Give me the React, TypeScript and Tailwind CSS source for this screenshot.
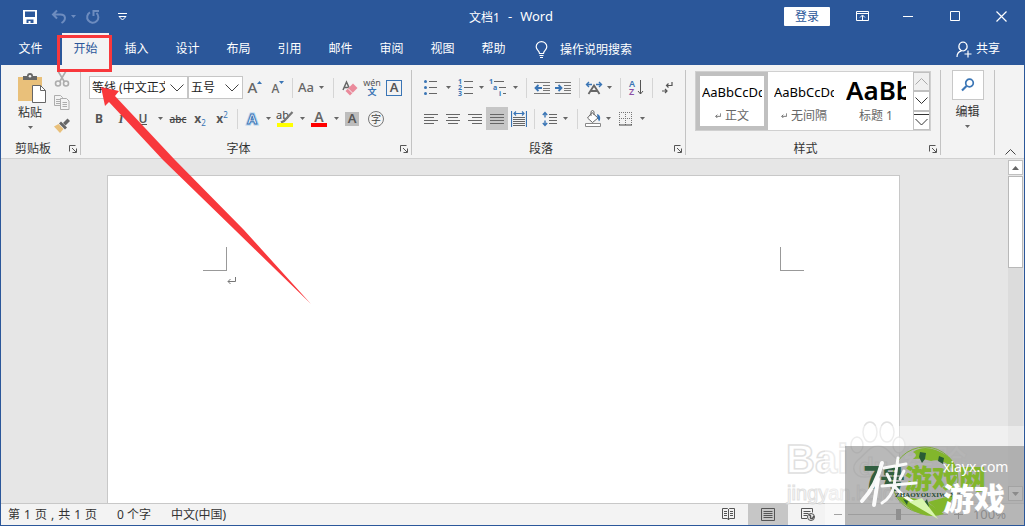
import type { ReactNode } from "react";

const TABS = ["文件", "开始", "插入", "设计", "布局", "引用", "邮件", "审阅", "视图", "帮助"];

function Caret() {
  return (
    <svg width="5" height="3" viewBox="0 0 5 3" className="shrink-0" aria-hidden="true">
      <path d="M0 0h5L2.5 3z" fill="#666" />
    </svg>
  );
}

function Tool({ label, w, children, active }: { label: string; w: string; children: ReactNode; active?: boolean }) {
  return (
    <button
      type="button"
      aria-label={label}
      className={`flex h-[23px] shrink-0 items-center justify-center ${w} ${active ? "bg-[#c6c6c6]" : ""}`}
    >
      {children}
    </button>
  );
}

function Drop({ label, w }: { label: string; w: string }) {
  return (
    <Tool label={label} w={w}>
      <Caret />
    </Tool>
  );
}

function Divider({ w }: { w: string }) {
  return (
    <span className={`flex h-[23px] shrink-0 items-center justify-center ${w}`}>
      <span className="h-5 w-px bg-[#d5d5d5]" />
    </span>
  );
}

function Launcher({ label }: { label: string }) {
  return (
    <button type="button" aria-label={label} className="mr-[3px]">
      <svg width="8" height="8" viewBox="0 0 8 8" fill="none" stroke="#555" aria-hidden="true">
        <path d="M.5 6.5v-6h6M3 3l4 4M7.5 3.5v4h-4" />
      </svg>
    </button>
  );
}

function Group({ name, launcher, children, className }: { name: string; launcher?: boolean; children: ReactNode; className: string }) {
  return (
    <section aria-label={name} className={`shrink-0 border-r border-[#c3c3c3] ${className}`}>
      <div className="h-[73px]">{children}</div>
      {launcher && (
        <div className="flex h-3 items-center">
          <span className="flex-1 pr-1 text-center leading-3">{name}</span>
          <Launcher label={`${name}设置`} />
        </div>
      )}
    </section>
  );
}

function Lines({ rows }: { rows: [number, number][] }) {
  return (
    <svg width="16" height="14" viewBox="0 0 16 14" stroke="#666" aria-hidden="true">
      {rows.map(([a, b], i) => (
        <path key={i} d={`M${a} ${i * 3 + 2.5}H${b}`} />
      ))}
    </svg>
  );
}

function Combo({ label, value, w }: { label: string; value: string; w: string }) {
  return (
    <span className={`relative block h-[23px] shrink-0 ${w}`}>
      <select
        aria-label={label}
        className="h-full w-full appearance-none border border-[#c6c6c6] bg-white pr-[22px] pl-0.5 text-xs text-[#222] outline-none"
      >
        <option>{value}</option>
      </select>
      <svg width="14" height="8" viewBox="0 0 14 8" className="pointer-events-none absolute top-2 right-1" fill="none" stroke="#444" aria-hidden="true">
        <path d="M.5 .5L7 7L13.5 .5" />
      </svg>
    </span>
  );
}

function TitleBar() {
  return (
    <div className="flex h-[33px] items-center text-white">
      <div className="flex flex-1 items-center pl-[21px]">
        <button type="button" aria-label="保存" className="mr-[13px]">
          <svg width="16" height="16" viewBox="0 0 16 16" className="block" aria-hidden="true">
            <path d="M1 1h14v14H1zM3 2.5v5.5h10V2.5zM4.5 10.5v3.500h2v-2h2v2h3v-3.500z" fill="#fff" fillRule="evenodd" />
          </svg>
        </button>
        <button type="button" aria-label="撤消" className="mr-1">
          <svg width="16" height="16" viewBox="0 0 16 16" className="block" fill="none" stroke="#6d8cbf" strokeWidth="2" aria-hidden="true">
            <path d="M6 1.500L2 5.500L6 9.500M2.500 5.500H9.500C15 5.500 15.500 11 10.500 14" />
          </svg>
        </button>
        <svg width="5" height="3" viewBox="0 0 5 3" className="mr-[9px]" aria-hidden="true">
          <path d="M0 0h5L2.500 3z" fill="#6d8cbf" />
        </svg>
        <button type="button" aria-label="恢复" className="mr-[17px]">
          <svg width="16" height="16" viewBox="0 0 16 16" className="block" fill="none" stroke="#6d8cbf" strokeWidth="2" aria-hidden="true">
            <path d="M5 3.300A5.600 5.600 0 1 0 11.500 4M8.500 7V2H14" />
          </svg>
        </button>
        <button type="button" aria-label="自定义快速访问工具栏">
          <svg width="9" height="8" viewBox="0 0 9 8" className="block" fill="none" stroke="#fff" aria-hidden="true">
            <path d="M0 .5h9M1 3.500h7L4.500 7z" />
          </svg>
        </button>
      </div>
      <h1 className="mr-6 flex gap-2 pt-0.5 text-[13px]">
        <span className="text-xs leading-5">文档1</span>
        <span>-</span>
        <span>Word</span>
      </h1>
      <div className="flex flex-1 items-center justify-end">
        <button type="button" className="mr-[9px] h-[19px] w-[46px] rounded-[1px] bg-white text-xs leading-none text-[#2b579a]">
          登录
        </button>
        <button type="button" aria-label="功能区显示选项" className="flex w-[46px] justify-center">
          <svg width="13" height="11" viewBox="0 0 13 11" fill="none" stroke="#fff" aria-hidden="true">
            <path d="M.5 .5h12v9H.5zM.5 2.500h12M6.500 9V4.500M4 6.500l2.500-2.500L9 6.500" />
          </svg>
        </button>
        <button type="button" aria-label="最小化" className="flex w-[47px] justify-center">
          <svg width="11" height="11" viewBox="0 0 11 11" stroke="#fff" aria-hidden="true">
            <path d="M0 5.500h10" />
          </svg>
        </button>
        <button type="button" aria-label="最大化" className="flex w-[46px] justify-center">
          <svg width="11" height="11" viewBox="0 0 11 11" fill="none" stroke="#fff" aria-hidden="true">
            <path d="M.5 .5h9v9h-9z" />
          </svg>
        </button>
        <button type="button" aria-label="关闭" className="flex w-[46px] justify-center">
          <svg width="11" height="11" viewBox="0 0 11 11" stroke="#fff" strokeWidth="1.200" aria-hidden="true">
            <path d="M.5 .5l10 10M10.500 .5l-10 10" />
          </svg>
        </button>
      </div>
    </div>
  );
}

function TabBar() {
  return (
    <nav className="flex h-8 text-white" aria-label="功能区选项卡">
      {TABS.map((t, i) => (
        <div key={t} className={`relative shrink-0 ${i === 0 ? "w-[59px]" : "w-[51px]"}`}>
          <button
            type="button"
            className={`block h-full w-full ${i === 1 ? "border-x-2 border-[#2b579a] bg-[#f3f3f3] text-[#2b579a]" : ""}`}
          >
            {t}
          </button>
          {i === 1 && <span className="pointer-events-none absolute top-0.5 -left-[3px] z-30 h-[37px] w-[55px] border-3 border-[#f8383c]" />}
        </div>
      ))}
      <button type="button" className="ml-[16px] flex items-center gap-3 pt-0.5">
        <svg width="13" height="18" viewBox="0 0 13 18" fill="none" stroke="#fff" strokeWidth="1.200" aria-hidden="true">
          <path d="M4.500 12.500C4.500 9.500 1.200 9 1.200 5.700a5.300 5 0 0 1 10.600 0C11.800 9 8.500 9.500 8.500 12.500zM4.500 14.500h4M5 16.500h3" />
        </svg>
        操作说明搜索
      </button>
      <button type="button" className="mr-6 ml-auto flex items-center gap-1">
        <svg width="16" height="17" viewBox="0 0 16 17" fill="none" stroke="#fff" strokeWidth="1.200" aria-hidden="true">
          <path d="M1 16c0-3.500 1.500-5.500 4.500-6.200M7 1a4.500 4.500 0 0 1 2 8.300c-1 .8-2.500.8-4 0A4.500 4.500 0 0 1 7 1zM12 9.500v7M8.500 13h7" />
        </svg>
        共享
      </button>
    </nav>
  );
}

function ClipboardGroup() {
  return (
    <Group name="剪贴板" launcher className="w-20">
      <div className="flex">
        <button type="button" className="ml-[11px] flex w-9 flex-col items-center pt-[3px]">
          <svg width="28" height="30" viewBox="0 0 28 30" className="ml-1" aria-hidden="true">
            <path d="M0 4h24v24H0z" fill="#e9c07a" />
            <path d="M5 3h4a3 3 0 0 1 6 0h4v4H5z" fill="#666" />
            <circle cx="12" cy="3.200" r="1.300" fill="#f3f3f3" />
            <path d="M14.500 12.500h8l5 5v12h-13z" fill="#fff" stroke="#666" />
            <path d="M22.500 12.500v5h5" fill="none" stroke="#666" />
          </svg>
          <span className="leading-5">粘贴</span>
          <span className="flex h-2 items-center">
            <Caret />
          </span>
        </button>
        <div className="ml-1 flex w-5 flex-col items-center gap-[5px]">
          <button type="button" aria-label="剪切" className="flex h-[18px] items-center">
            <svg width="16" height="16" viewBox="0 0 16 16" fill="none" stroke="#adadad" strokeWidth="1.600" aria-hidden="true">
              <path d="M4 0l6.500 11M12 0L5.500 11" />
              <circle cx="4" cy="12.500" r="2.500" />
              <circle cx="12" cy="12.500" r="2.500" />
            </svg>
          </button>
          <button type="button" aria-label="复制" className="flex h-[18px] items-center">
            <svg width="16" height="15" viewBox="0 0 16 15" fill="#f3f3f3" stroke="#adadad" aria-hidden="true">
              <path d="M.5 .5h6l2 2v8h-8zM2 4.500h4M2 6.500h4M2 8.500h4" />
              <path d="M6.500 3.500h6l2.500 2.500v8.500H6.500zM8.500 7.500h4.500M8.500 9.500h4.500M8.500 11.500h4.500" />
            </svg>
          </button>
          <button type="button" aria-label="格式刷" className="flex h-[18px] items-center">
            <svg width="16" height="15" viewBox="0 0 16 15" aria-hidden="true">
              <path d="M0 8.500l4.500-2.500 5 5L6 15z" fill="#e9c07a" />
              <path d="M5 5.500l2-2 6 6-2 2z" fill="#666" />
              <path d="M9 5l4.500-4.500L16 3l-4.500 4.500z" fill="#666" />
            </svg>
          </button>
        </div>
      </div>
    </Group>
  );
}

function FontGroup() {
  const ch = "font-bold text-[#555] leading-none";
  return (
    <Group name="字体" launcher className="w-[331px]">
      <div className="flex flex-col gap-2 pt-1.5 pl-[7px]">
        <div className="flex pl-px">
          <Combo label="字体" value="等线 (中文正文)" w="w-[99px]" />
          <Combo label="字号" value="五号" w="w-[55px]" />
          <Tool label="增大字号" w="w-6">
            <span className="text-[15px] leading-none font-medium text-[#666]">A</span>
            <svg width="5" height="3" viewBox="0 0 5 3" className="mb-2.5" aria-hidden="true"><path d="M0 3h5L2.500 0z" fill="#3a75b5" /></svg>
          </Tool>
          <Tool label="减小字号" w="w-[22px]">
            <span className="mt-0.5 text-xs leading-none font-medium text-[#666]">A</span>
            <svg width="5" height="3" viewBox="0 0 5 3" className="mb-2.5" aria-hidden="true"><path d="M0 0h5L2.500 3z" fill="#3a75b5" /></svg>
          </Tool>
          <Divider w="w-1.5" />
          <Tool label="更改大小写" w="w-[22px]">
            <span className="text-[13px] font-medium text-[#666]">Aa</span>
          </Tool>
          <Drop label="大小写选项" w="w-2" />
          <Divider w="w-4" />
          <Tool label="清除所有格式" w="w-[18px]">
            <svg width="16" height="16" viewBox="0 0 16 16" aria-hidden="true">
              <path d="M1 10L4.500 2L7 7.500M2.500 7.500h4" fill="none" stroke="#666" strokeWidth="1.500" />
              <path d="M3.500 11L11 3.500l4.500 4.500L8 15.500z" fill="#ea8a9b" />
              <path d="M6 8.500l4.500 4.500" stroke="#f3f3f3" />
            </svg>
          </Tool>
          <Tool label="拼音指南" w="w-[26px]">
            <span className="flex flex-col items-center text-[#555]">
              <span className="text-[9px] leading-[8px]">wén</span>
              <span className="text-[9px] leading-[10px] font-bold text-[#3a75b5]">文</span>
            </span>
          </Tool>
          <Tool label="字符边框" w="w-[18px]">
            <span className="flex h-4 w-4 items-center justify-center border border-[#3a75b5] text-[13px] leading-none font-semibold text-[#555]">A</span>
          </Tool>
        </div>
        <div className="flex">
          <Tool label="加粗" w="w-[22px]"><span className={ch}>B</span></Tool>
          <Tool label="倾斜" w="w-[22px]"><span className="font-['Liberation_Serif',serif] text-[13px] leading-none font-bold text-[#555] italic">I</span></Tool>
          <Tool label="下划线" w="w-[22px]"><span className="border-b border-[#555] leading-[11px] font-semibold text-[#555]">U</span></Tool>
          <Drop label="下划线选项" w="w-3" />
          <Tool label="删除线" w="w-6"><span className="text-[10px] leading-none font-medium text-[#444] line-through">abc</span></Tool>
          <Tool label="下标" w="w-5"><span className={ch}>x</span><span className="mt-2 text-[8px] leading-none text-[#3a75b5]">2</span></Tool>
          <Tool label="上标" w="w-6"><span className={ch}>x</span><span className="mb-2 text-[8px] leading-none text-[#3a75b5]">2</span></Tool>
          <Divider w="w-1.5" />
          <Tool label="文本效果" w="w-6">
            <svg width="18" height="18" viewBox="0 0 18 18" className="overflow-visible" aria-hidden="true" fontFamily="Noto Sans" fontWeight="700" fontSize="14">
              <text x="9" y="14" textAnchor="middle" fill="none" stroke="#b5d4ef" strokeWidth="3">A</text>
              <text x="9" y="14" textAnchor="middle" fill="#fff" stroke="#3a75b5" strokeWidth="1">A</text>
            </svg>
          </Tool>
          <Drop label="文本效果选项" w="w-2" />
          <Tool label="突出显示" w="w-[26px]">
            <svg width="18" height="18" viewBox="0 0 18 18" className="overflow-visible" aria-hidden="true">
              <text x="0" y="9" fontSize="11" fontFamily="Noto Sans" fill="#444">ab</text>
              <path d="M16.500 2L8 11l-3 1.500" fill="none" stroke="#777" strokeWidth="2.200" />
              <path d="M1 13h16v4H1z" fill="#ff0" />
            </svg>
          </Tool>
          <Drop label="突出显示颜色" w="w-2" />
          <Tool label="字体颜色" w="w-[26px]">
            <span className="block w-4 border-b-4 border-[#f00] text-center text-[14px] leading-3 font-semibold text-[#666]">A</span>
          </Tool>
          <Drop label="字体颜色选项" w="w-2" />
          <Tool label="字符底纹" w="w-6"><span className="flex h-[14px] w-[14px] items-center justify-center bg-[#bdbdbd] text-[13px] leading-none font-semibold text-[#555]">A</span></Tool>
          <Tool label="带圈字符" w="w-6"><span className="flex h-4 w-4 items-center justify-center rounded-full border border-[#777] text-[10px] leading-none text-[#444]">字</span></Tool>
        </div>
      </div>
    </Group>
  );
}

function ParagraphGroup() {
  return (
    <Group name="段落" launcher className="w-[274px]">
      <div className="flex flex-col gap-2 pt-1.5 pl-2">
        <div className="flex">
          <Tool label="项目符号" w="w-[22px]">
            <svg width="14" height="16" viewBox="0 0 14 16" aria-hidden="true">
              <path d="M5 1.500h8M5 7.500h8M5 13.500h8" stroke="#666" />
              <g fill="#3a75b5"><circle cx="1.500" cy="1.500" r="1.500" /><circle cx="1.500" cy="7.500" r="1.500" /><circle cx="1.500" cy="13.500" r="1.500" /></g>
            </svg>
          </Tool>
          <Drop label="项目符号库" w="w-3" />
          <Tool label="编号" w="w-[22px]">
            <svg width="15" height="17" viewBox="0 0 15 17" className="overflow-visible" aria-hidden="true">
              <path d="M6 2.500h9M6 8.500h9M6 14.500h9" stroke="#666" />
              <g fill="#3a75b5" fontSize="7" fontWeight="700" fontFamily="Noto Sans"><text x="0" y="5">1</text><text x="0" y="11">2</text><text x="0" y="17">3</text></g>
            </svg>
          </Tool>
          <Drop label="编号库" w="w-2.5" />
          <Tool label="多级列表" w="w-6">
            <svg width="18" height="17" viewBox="0 0 18 17" className="overflow-visible" aria-hidden="true">
              <path d="M5 2.500h10M10 8.500h7M14 14.500h3" stroke="#666" />
              <g fill="#3a75b5" fontSize="7" fontWeight="700" fontFamily="Noto Sans"><text x="0" y="5">1</text><text x="4" y="11">a</text><text x="10" y="17">i</text></g>
            </svg>
          </Tool>
          <Drop label="多级列表库" w="w-2.5" />
          <Divider w="w-3" />
          <Tool label="减少缩进量" w="w-5">
            <svg width="16" height="12" viewBox="0 0 16 12" aria-hidden="true">
              <path d="M0 .5h16M9 3.500h7M9 6.500h7M9 8.500h7M0 11.500h16" stroke="#777" />
              <path d="M8 6H2M4.500 3L1.500 6l3 3" fill="none" stroke="#3a75b5" strokeWidth="1.800" />
            </svg>
          </Tool>
          <Tool label="增加缩进量" w="w-[22px]">
            <svg width="16" height="12" viewBox="0 0 16 12" aria-hidden="true">
              <path d="M0 .5h16M9 3.500h7M9 6.500h7M9 8.500h7M0 11.500h16" stroke="#777" />
              <path d="M0 6h6M3.500 3l3 3-3 3" fill="none" stroke="#3a75b5" strokeWidth="1.800" />
            </svg>
          </Tool>
          <Divider w="w-2.5" />
          <Tool label="中文版式" w="w-5">
            <svg width="18" height="14" viewBox="0 0 18 14" fill="none" aria-hidden="true">
              <path d="M3.500 13L9 4.500L14.500 13M6 10h6" stroke="#666" strokeWidth="1.800" />
              <path d="M7 3.500H1.500M4 1L1.500 3.500L4 6M11 3.500h5.500M14 1l2.500 2.500L14 6" stroke="#3a75b5" strokeWidth="1.400" />
            </svg>
          </Tool>
          <Drop label="中文版式选项" w="w-2.5" />
          <Divider w="w-3" />
          <Tool label="排序" w="w-5">
            <svg width="15" height="17" viewBox="0 0 15 17" className="overflow-visible" aria-hidden="true" fontSize="9" fontWeight="600" fontFamily="Noto Sans">
              <text x="0" y="8" fill="#3a75b5">A</text>
              <text x="0" y="16" fill="#8c4fa5">Z</text>
              <path d="M11.500 1v14M9 12l2.500 3 2.500-3" fill="none" stroke="#555" />
            </svg>
          </Tool>
          <Divider w="w-3" />
          <Tool label="显示编辑标记" w="w-[18px]">
            <svg width="11" height="12" viewBox="0 0 11 12" fill="none" stroke="#555" strokeWidth="1.200" aria-hidden="true">
              <path d="M10 0v3.500H4.500M6.500 1.500l-2 2 2 2M0 9h5M3 7l2 2-2 2" />
            </svg>
          </Tool>
        </div>
        <div className="flex">
          <Tool label="左对齐" w="w-[22px]"><Lines rows={[[1, 15], [1, 11], [1, 15], [1, 11]]} /></Tool>
          <Tool label="居中" w="w-[22px]"><Lines rows={[[1, 15], [3, 13], [1, 15], [3, 13]]} /></Tool>
          <Tool label="右对齐" w="w-[22px]"><Lines rows={[[1, 15], [5, 15], [1, 15], [5, 15]]} /></Tool>
          <Tool label="两端对齐" w="w-[22px]" active><Lines rows={[[1, 15], [1, 15], [1, 15], [1, 15]]} /></Tool>
          <Tool label="分散对齐" w="w-[22px]">
            <svg width="16" height="16" viewBox="0 0 16 16" fill="none" aria-hidden="true">
              <path d="M.5 0v16M15.500 0v16M3 2.500h10M5 .5l-2 2 2 2M11 .5l2 2-2 2" stroke="#3a75b5" strokeWidth="1.200" />
              <path d="M2 6.500h12M2 8.500h12M2 10.500h12M2 12.500h12M2 14.500h12" stroke="#666" />
            </svg>
          </Tool>
          <Divider w="w-2" />
          <Tool label="行距" w="w-[22px]">
            <svg width="15" height="16" viewBox="0 0 15 16" fill="none" aria-hidden="true">
              <path d="M3 1.500v5M.8 4L3 1.500L5.200 4M3 9.500v5M.8 12L3 14.500L5.200 12" stroke="#3a75b5" strokeWidth="1.400" />
              <path d="M7 3.500h8M7 6.500h8M7 9.500h8M7 12.500h8" stroke="#666" />
            </svg>
          </Tool>
          <Drop label="行距选项" w="w-2.5" />
          <Divider w="w-[14px]" />
          <Tool label="底纹" w="w-[18px]">
            <svg width="17" height="17" viewBox="0 0 17 17" fill="none" aria-hidden="true">
              <path d="M7 2.500l6 5.500-5.500 4.500L2.500 8zM6 6V1.500q1.500-2 3 0V5" stroke="#666" fill="#fff" />
              <path d="M12 4q4 1 3 6l-1 1.500L12.500 8z" fill="#3a75b5" />
              <path d="M.5 13.500h15v3H.5z" fill="#fff" stroke="#888" />
            </svg>
          </Tool>
          <Drop label="底纹颜色" w="w-3" />
          <Tool label="边框" w="w-[22px]">
            <svg width="13" height="14" viewBox="0 0 13 14" fill="none" stroke="#777" aria-hidden="true">
              <path d="M0 .5h13M0 6.500h13M.5 0v13M6.500 0v13M12.500 0v13" strokeDasharray="1 1" />
              <path d="M0 13h13" stroke="#444" />
            </svg>
          </Tool>
          <Drop label="边框选项" w="w-3" />
        </div>
      </div>
    </Group>
  );
}

function StyleCard({ sample, name, selected, heading }: { sample: string; name: string; selected?: boolean; heading?: boolean }) {
  return (
    <button
      type="button"
      className={`flex w-[72px] shrink-0 flex-col overflow-hidden border-4 ${selected ? "border-[#c0c0c0]" : "border-transparent"}`}
    >
      <span
        className={`ml-0.5 h-[30px] w-[60px] overflow-hidden text-left whitespace-nowrap text-black ${heading ? "text-[26px] leading-7 font-semibold" : "pt-1.5 text-[13px] leading-5"}`}
      >
        {sample}
      </span>
      <span className="flex w-full items-center justify-center gap-1 leading-5 whitespace-nowrap text-[#666]">
        {!heading && <ReturnMark small />}
        {name}
      </span>
    </button>
  );
}

function ReturnMark({ small }: { small?: boolean }) {
  return (
    <svg width={small ? 6 : 9} height={small ? 6 : 8} viewBox="0 0 9 8" fill="none" stroke="#777" strokeWidth={small ? 1.5 : 1} aria-hidden="true">
      <path d="M8.500 0v4.500H1M3.500 2L1 4.500L3.500 7" />
    </svg>
  );
}

function StylesGroup() {
  const cell = "flex flex-1 items-center justify-center border border-[#c0c0c0]";
  return (
    <Group name="样式" launcher className="w-[255px]">
      <div className="flex pt-px pl-[9px]">
        <div className="flex h-[60px] w-[236px] border border-[#d0d0d0] bg-white">
          <div className="flex min-w-0 flex-1 overflow-hidden">
            <StyleCard sample="AaBbCcDd" name="正文" selected />
            <StyleCard sample="AaBbCcDd" name="无间隔" />
            <StyleCard sample="AaBbC" name="标题 1" heading />
          </div>
          <div className="flex w-[17px] shrink-0 flex-col">
            <button type="button" aria-label="上一行样式" className={`${cell} bg-[#f0f0f0]`}>
              <svg width="13" height="7" viewBox="0 0 13 7" fill="none" stroke="#aaa" aria-hidden="true"><path d="M.5 6.500l6-6 6 6" /></svg>
            </button>
            <button type="button" aria-label="下一行样式" className={cell}>
              <svg width="13" height="7" viewBox="0 0 13 7" fill="none" stroke="#333" aria-hidden="true"><path d="M.5 .5l6 6 6-6" /></svg>
            </button>
            <button type="button" aria-label="其他样式" className={cell}>
              <svg width="15" height="12" viewBox="0 0 15 12" fill="none" stroke="#333" aria-hidden="true"><path d="M0 .5h15M1.500 5l6 6 6-6" /></svg>
            </button>
          </div>
        </div>
      </div>
    </Group>
  );
}

function Ribbon() {
  return (
    <div className="relative flex border-b border-[#d0d0d0] bg-[#f3f3f3] pt-[5px] pb-[3px] text-[#333]">
      <ClipboardGroup />
      <FontGroup />
      <ParagraphGroup />
      <StylesGroup />
      <Group name="编辑" className="w-[54px]">
        <button type="button" className="mx-auto flex flex-col items-center">
          <span className="flex h-[30px] w-8 items-center justify-center border border-[#c8c8c8] bg-white">
            <svg width="14" height="14" viewBox="0 0 14 14" fill="none" stroke="#3a75b5" aria-hidden="true">
              <circle cx="8.500" cy="5" r="3.800" strokeWidth="1.700" />
              <path d="M5.500 8L1 12.500" strokeWidth="2.200" />
            </svg>
          </span>
          <span className="mt-0.5 leading-5">编辑</span>
          <span className="flex h-2 items-center">
            <Caret />
          </span>
        </button>
      </Group>
      <button type="button" aria-label="折叠功能区" className="mt-auto mr-2 ml-auto">
        <svg width="11" height="6" viewBox="0 0 11 6" className="block" fill="none" stroke="#444" aria-hidden="true">
          <path d="M.5 5.500l5-5 5 5" />
        </svg>
      </button>
    </div>
  );
}

function DocumentArea() {
  return (
    <main className="flex min-h-0 flex-1 bg-[#e6e6e6]">
      <div className="flex min-w-0 flex-1 justify-center pt-4 pr-[18px] pl-4">
        <article className="w-full max-w-[793px] border border-b-0 border-[#c8c8c8] bg-white">
          <div className="flex justify-between px-[95px] pt-[71px]">
            <span className="h-6 w-6 border-r border-b border-[#999]" />
            <span className="h-6 w-6 border-b border-l border-[#999]" />
          </div>
          <p className="pt-1.5 pl-[119px]">
            <ReturnMark />
          </p>
        </article>
      </div>
      <div className="flex w-4 flex-col pt-px pr-px" role="presentation">
        <button type="button" aria-label="向上滚动" className="flex h-[15px] items-center justify-center border border-[#c0c0c0] bg-white">
          <svg width="7" height="4" viewBox="0 0 7 4" aria-hidden="true"><path d="M0 4h7L3.500 0z" fill="#666" /></svg>
        </button>
        <div className="mt-px flex flex-1 flex-col bg-[#dcdcdc]">
          <div className="h-[92px] border border-[#b8b8b8] bg-white" />
        </div>
        <button type="button" aria-label="向下滚动" className="mb-0.5 flex h-[15px] items-center justify-center border border-[#b0b0b0] bg-white">
          <svg width="7" height="4" viewBox="0 0 7 4" aria-hidden="true"><path d="M0 0h7L3.500 4z" fill="#555" /></svg>
        </button>
      </div>
    </main>
  );
}

function StatusBar() {
  const view = "flex h-full items-center justify-center w-10";
  return (
    <footer className="flex h-[22px] items-center border-t border-[#c8c8c8] bg-[#f3f3f3] text-[#333]">
      <span className="ml-[7px] flex gap-1">
        <span>第</span>
        <span>1</span>
        <span>页</span>
        <span>,</span>
        <span>共</span>
        <span>1</span>
        <span>页</span>
      </span>
      <span className="ml-5">0 个字</span>
      <span className="ml-5">中文(中国)</span>
      <div className="ml-auto flex h-full items-center">
        <button type="button" aria-label="阅读视图" className={view}>
          <svg width="13" height="13" viewBox="0 0 13 13" fill="none" stroke="#555" aria-hidden="true">
            <path d="M.5 .5h5l1 1 1-1h5v10h-5l-1 1.500-1-1.500h-5zM6.500 1v11M2 3.500h3M2 5.500h3M2 7.500h3M8 3.500h3M8 5.500h3M8 7.500h3" />
          </svg>
        </button>
        <button type="button" aria-label="页面视图" className={`${view} bg-[#c6c6c6]`}>
          <svg width="14" height="13" viewBox="0 0 14 13" fill="none" stroke="#555" aria-hidden="true">
            <path d="M.5 .5h13v12H.5zM2.500 3.500h9M2.500 5.500h9M2.500 7.500h9M2.500 9.500h9" />
          </svg>
        </button>
        <button type="button" aria-label="Web 版式视图" className={view}>
          <svg width="14" height="13" viewBox="0 0 14 13" fill="none" stroke="#555" aria-hidden="true">
            <path d="M6 10.500H.5V.5h11v4M2.500 3.500h7M2.500 5.500h5M2.500 7.500h4" />
            <circle cx="10" cy="9" r="3.500" fill="#eee" />
            <path d="M8 7q2 0 1.500 2t2 1.500L13 8" strokeWidth="1.500" />
          </svg>
        </button>
        <button type="button" aria-label="缩小" className="flex w-5 justify-center">
          <svg width="9" height="9" viewBox="0 0 9 9" stroke="#666" aria-hidden="true"><path d="M0 4.500h8" /></svg>
        </button>
        <input
          type="range"
          aria-label="缩放"
          min="10"
          max="190"
          defaultValue="100"
          className="h-3 w-[100px] appearance-none bg-transparent [&::-webkit-slider-runnable-track]:h-px [&::-webkit-slider-runnable-track]:bg-[#999] [&::-webkit-slider-thumb]:-mt-[5px] [&::-webkit-slider-thumb]:h-[11px] [&::-webkit-slider-thumb]:w-[5px] [&::-webkit-slider-thumb]:appearance-none [&::-webkit-slider-thumb]:bg-[#666]"
        />
        <button type="button" aria-label="放大" className="flex w-5 justify-center">
          <svg width="9" height="9" viewBox="0 0 9 9" stroke="#666" aria-hidden="true"><path d="M0 4.500h9M4.500 0v9" /></svg>
        </button>
        <span className="mr-[18px] w-[38px] text-right text-[13px] text-[#555]">100%</span>
      </div>
    </footer>
  );
}

function Watermarks() {
  return (
    <div className="pointer-events-none absolute -right-px -bottom-px z-20 h-[112px] w-60" aria-hidden="true">
      <svg width="240" height="112" viewBox="0 0 240 112" className="absolute right-0 bottom-0" fill="#fff" stroke="#d9d9d9" strokeWidth="1.500" opacity="0.8" fontFamily="Liberation Sans, Noto Sans CJK SC, sans-serif">
        <text x="1" y="59" fontSize="40" fontWeight="700">Bai</text>
        <text x="118" y="59" fontSize="32" fontWeight="700" strokeWidth="1" opacity="0.5">经验</text>
        <text x="2" y="86" fontSize="20" strokeWidth="1">jingyan.baidu.com</text>
        <ellipse cx="85" cy="18" rx="7" ry="10" />
        <ellipse cx="102" cy="18" rx="7" ry="10" />
        <ellipse cx="72" cy="31" rx="6" ry="8" />
        <ellipse cx="114" cy="31" rx="6" ry="8" />
        <path d="M93 32c9 0 12 8 20 14 8 7 4 18-7 17-9-1-16-1-25 0-12 1-16-10-8-17 8-6 11-14 20-14z" />
        <text x="74" y="61" fontSize="24" fontWeight="700" strokeWidth="1">du</text>
      </svg>
      <div className="absolute right-0 bottom-0 h-[100px] w-[200px] bg-white/40" />
      <div className="absolute right-0 bottom-0 h-20 w-[180px] bg-[#808080]/55" />
      <svg width="180" height="80" viewBox="0 0 180 80" className="absolute right-0 bottom-0" fontFamily="Noto Sans CJK SC, sans-serif">
        <circle cx="80" cy="34" r="33" fill="none" stroke="#7fae3a" strokeWidth="1" />
        <path d="M68 6Q82-4 104 11q7 6 8 16Q99 11 86 15 77 12 68 13 74 9 68 6z" fill="#82b62c" />
        <path d="M52 51q18 0 30 5l17 12Q74 76 52 51z" fill="#82b62c" />
        <path d="M83 56l25-7q-3 12-12 18z" fill="#82b62c" />
        <path d="M75 6l6 1-1 6-3 4-3-6zM94 10l5 2-1 6-5-3zM78 58l4-5 2 8-5 3zM58 53l5 2-1 4z" fill="#295c35" />
        <text x="18" y="43" fontSize="32" fontWeight="900" fill="#315f41">7</text>
        <text x="35" y="42" fontSize="25" fontWeight="900" fill="#315f41">号</text>
        <text x="60" y="43" fontSize="27" fontWeight="900" fill="#82b62c">游戏网</text>
        <g fill="none" stroke="#fff" strokeLinecap="round" opacity="0.95">
          <path d="M37 17Q31 40 17 55" strokeWidth="4" />
          <path d="M33 33L29 59" strokeWidth="4" />
          <path d="M39 22l22-4M53 12l-4 28Q46 52 37 57M37 40l34-3M50 41q10 12 23 17M42 28l3 6M59 25l-4 8" strokeWidth="3" />
        </g>
        <path d="M64 56l29 17-16-21z" fill="#d8f6ad" />
        <text x="50" y="51" fontSize="7" fontWeight="700" fontFamily="Liberation Serif, serif" fill="#24492f">ZHAOYOUXIWANG</text>
        <text x="98" y="64" fontSize="31" fontWeight="900" fill="#fff">游戏</text>
        <text x="98" y="26" fontSize="14" fontFamily="Noto Sans, sans-serif" fill="#fff">xiayx.com</text>
      </svg>
    </div>
  );
}

export default function App() {
  return (
    <div className="relative flex h-screen flex-col overflow-hidden border-x border-b border-[#2b579a] bg-[#2b579a] font-['Noto_Sans','Noto_Sans_CJK_SC',sans-serif] text-xs">
      <header>
        <TitleBar />
        <TabBar />
      </header>
      <Ribbon />
      <DocumentArea />
      <StatusBar />
      <Watermarks />
      <svg width="212" height="219" viewBox="0 0 212 219" className="pointer-events-none absolute top-[86px] left-[99px] z-30" aria-hidden="true">
        <path d="M1 1L19 5L15 10L75 74L144 144L211 218L135 144L63 74L9 16L5 20z" fill="#f8383c" />
      </svg>
    </div>
  );
}
